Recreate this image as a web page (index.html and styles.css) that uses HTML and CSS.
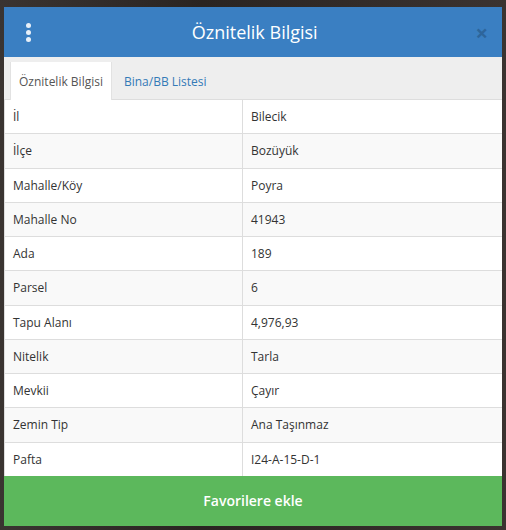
FILE: index.html
```html
<!DOCTYPE html>
<html lang="tr">
<head>
<meta charset="utf-8">
<link rel="stylesheet" href="styles.css">
</head>
<body>
<div class="backdrop">
  <div class="modal">
    <div class="modal-header">
      <span class="kebab"><i></i><i></i><i></i></span>
      <h1 class="title">Öznitelik Bilgisi</h1>
      <span class="close">×</span>
    </div>
    <div class="tabs">
      <div class="tab active">Öznitelik Bilgisi</div>
      <div class="tab">Bina/BB Listesi</div>
    </div>
    <table class="attr">
      <tbody>
        <tr><td>İl</td><td>Bilecik</td></tr>
        <tr><td>İlçe</td><td>Bozüyük</td></tr>
        <tr><td>Mahalle/Köy</td><td>Poyra</td></tr>
        <tr><td>Mahalle No</td><td>41943</td></tr>
        <tr><td>Ada</td><td>189</td></tr>
        <tr><td>Parsel</td><td>6</td></tr>
        <tr><td>Tapu Alanı</td><td>4,976,93</td></tr>
        <tr><td>Nitelik</td><td>Tarla</td></tr>
        <tr><td>Mevkii</td><td>Çayır</td></tr>
        <tr><td>Zemin Tip</td><td>Ana Taşınmaz</td></tr>
        <tr><td>Pafta</td><td>I24-A-15-D-1</td></tr>
      </tbody>
    </table>
    <button class="fav">Favorilere ekle</button>
  </div>
</div>
</body>
</html>
```
FILE: styles.css
```css
html, body {
  margin: 0;
  padding: 0;
}
body {
  background: #2e2825;
  font-family: "Open Sans", "Liberation Sans", sans-serif;
  width: 506px;
  height: 530px;
  overflow: hidden;
}
.backdrop {
  padding: 7px 4px 0 4px;
  background: linear-gradient(90deg, #3a3431 0%, #2a2421 40%, #3b3330 100%);
  height: 530px;
  box-sizing: border-box;
}
.modal {
  width: 498px;
  background: #fff;
  display: flex;
  flex-direction: column;
}
.modal-header {
  height: 50px;
  background: #3a7fc2;
  display: flex;
  align-items: center;
  justify-content: space-between;
  padding: 0 14px 0 20px;
  box-sizing: border-box;
}
.kebab {
  width: 8px;
  display: flex;
  flex-direction: column;
  align-items: center;
  gap: 2px;
}
.kebab i {
  display: block;
  width: 5px;
  height: 5px;
  border-radius: 50%;
  background: #e8f0f8;
}
.title {
  margin: 0;
  font-size: 18px;
  font-weight: 500;
  color: #fff;
  flex: 1;
  text-align: center;
  padding-left: 2px;
}
.close {
  font-size: 22px;
  font-weight: 700;
  color: #2b5f92;
  line-height: 1;
  opacity: 0.8;
}
.tabs {
  background: #eeeeee;
  display: flex;
  padding: 5px 0 0 6px;
  height: 43px;
  box-sizing: border-box;
  border-bottom: 1px solid #dddddd;
  align-items: stretch;
}
.tab {
  font-size: 12px;
  color: #337ab7;
  padding: 0 12px;
  display: flex;
  align-items: center;
  margin-bottom: -1px;
}
.tab.active {
  background: #fff;
  color: #555;
  padding: 0 8px;
  border-left: 1px solid #e2e2e2;
  border-right: 1px solid #e2e2e2;
}
.attr {
  width: 100%;
  border-collapse: collapse;
  font-size: 12px;
  color: #333;
  border-left: 1px solid #ddd;
}
.attr td {
  padding: 8px;
  line-height: 17.25px;
  border-bottom: 1px solid #ddd;
  text-align: left;
}
.attr td:first-child {
  width: 221px;
  border-right: 1px solid #ddd;
}
.attr tr:nth-child(even) td {
  background: #f9f9f9;
}
.attr tr:last-child td {
  border-bottom: none;
}
.fav {
  height: 50px;
  border: 0;
  background: #5cb85c;
  color: #fff;
  font-family: "Open Sans", "Liberation Sans", sans-serif;
  font-size: 14px;
  font-weight: 600;
  cursor: pointer;
}
```
